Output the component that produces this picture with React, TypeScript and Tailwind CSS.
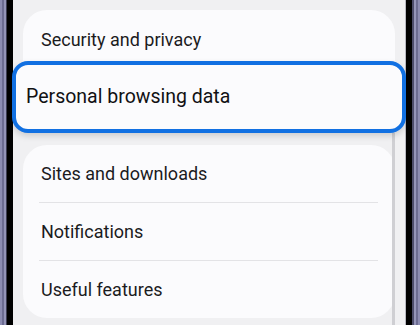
import React from 'react';

const FONT = { fontFamily: 'Roboto, "Noto Sans", sans-serif' };

function Row({ label, last }: { label: string; last?: boolean }) {
  return (
    <div>
      <div className="h-[57px] flex items-center pl-[18px] text-[18px] text-[#1b1b1d]">
        {label}
      </div>
      {!last && <div className="mx-[16px] mr-[17px] h-px bg-[#e3e3e6]" />}
    </div>
  );
}

export default function App() {
  return (
    <div className="w-[420px] h-[325px] flex overflow-hidden" style={FONT}>
      {/* left bezel */}
      <div className="flex h-full shrink-0">
        <div className="w-[2px] bg-[#8c8cb2]" />
        <div className="w-[2px] bg-[#6c6c92]" />
        <div className="w-[2px] bg-[#9494b8]" />
        <div className="w-[1px] bg-[#3c3c52]" />
        <div className="w-[6px] bg-black" />
      </div>

      {/* screen */}
      <div className="relative flex-1 bg-[#f0f0f2] px-[10px] pt-[10px]">
        <div className="rounded-[24px] bg-[#fbfbfd]">
          <div className="h-[58px] flex items-center pl-[18px] text-[18px] text-[#1b1b1d]">
            Security and privacy
          </div>
          <div className="mx-[16px] h-px bg-[#e3e3e6]" />
          {/* row under the callout */}
          <div className="h-[58px]" />
        </div>

        <div className="mt-[18px] rounded-[24px] bg-[#fbfbfd]">
          <Row label="Sites and downloads" />
          <Row label="Notifications" />
          <Row label="Useful features" last />
        </div>

        {/* scrollbar */}
        <div className="absolute right-[10px] top-[133px] bottom-0 w-[3px] bg-[#cfcfd3]" />
      </div>

      {/* right bezel */}
      <div className="flex h-full shrink-0">
        <div className="w-[1px] bg-[#b8b8c0]" />
        <div className="w-[6px] bg-black" />
        <div className="w-[2px] bg-[#4c4c6a]" />
        <div className="w-[2px] bg-[#9494b8]" />
        <div className="w-[2px] bg-[#6c6c92]" />
        <div className="w-[2px] bg-[#8c8cb2]" />
      </div>

      {/* highlighted callout */}
      <div className="absolute left-[12px] top-[61px] w-[394px] h-[72px] rounded-[16px] border-[4px] border-[#1170e2] bg-[#fbfbfd] shadow-[0_3px_6px_rgba(0,0,0,0.15)] flex items-center pl-[10px] text-[19.5px] text-[#111113]">
        Personal browsing data
      </div>
    </div>
  );
}
